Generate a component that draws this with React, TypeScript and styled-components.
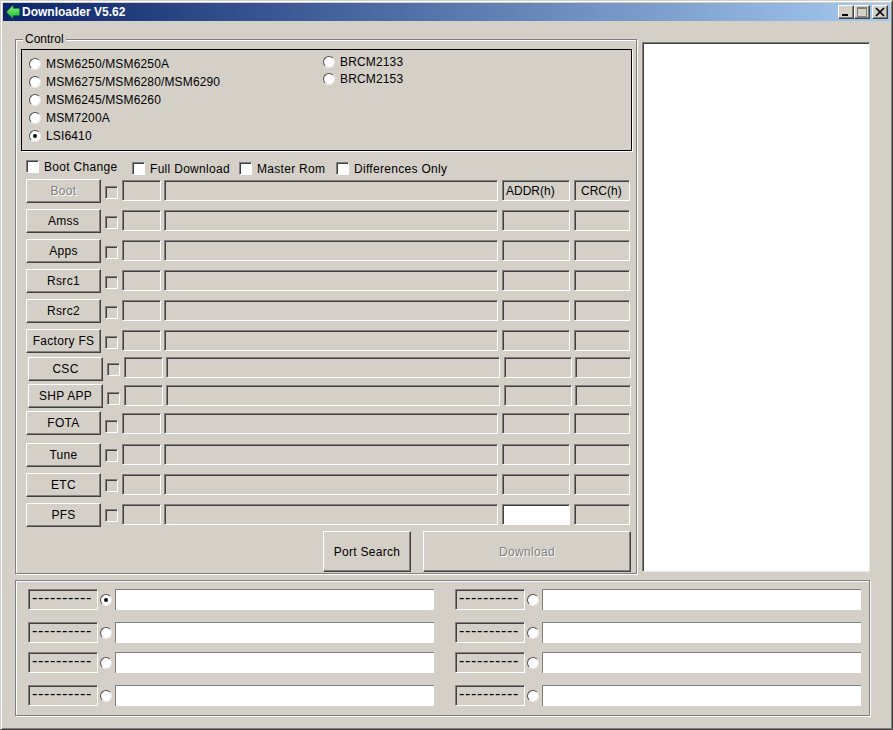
import React from "react";
import styled, { createGlobalStyle, css } from "styled-components";

const Global = createGlobalStyle`
  html, body { margin: 0; padding: 0; background: #d4d0c8; }
  * { box-sizing: border-box; }
`;

const FONT = `"Liberation Sans", Arial, sans-serif`;
const BG = "#d4d0c8";

const sunken = css`
  border-style: solid;
  border-width: 1px;
  border-color: #808080 #fff #fff #808080;
  box-shadow: inset 1px 1px 0 #404040;
`;

const raised = css`
  border-style: solid;
  border-width: 1px;
  border-color: #fff #404040 #404040 #fff;
  box-shadow: inset -1px -1px 0 #808080;
  background: ${BG};
`;

const etched = css`
  border: 1px solid #808080;
  box-shadow: inset 1px 1px 0 #fff, 1px 1px 0 #fff;
`;

const Window = styled.div`
  width: 893px;
  height: 730px;
  padding: 2px;
  background: ${BG};
  border-style: solid;
  border-width: 1px;
  border-color: ${BG} #404040 #404040 ${BG};
  box-shadow: inset 1px 1px 0 #fff, inset -1px -1px 0 #808080;
  font-family: ${FONT};
  font-size: 12px;
  color: #000;
  display: flex;
  flex-direction: column;
  overflow: hidden;
`;

const TitleBar = styled.div`
  height: 18px;
  flex: none;
  display: flex;
  align-items: center;
  padding: 0 2px 0 3px;
  background: linear-gradient(90deg, #0a246a, #a6caf0);
`;

const TitleText = styled.span`
  margin-left: 2px;
  color: #fff;
  font-weight: 700;
  font-size: 12px;
  flex: 1;
`;

const CaptionButton = styled.span<{ $gap?: number }>`
  ${raised}
  width: 16px;
  height: 14px;
  margin-left: ${(p) => p.$gap ?? 0}px;
  display: flex;
  align-items: center;
  justify-content: center;
`;

const Main = styled.div`
  display: flex;
  gap: 5px;
  padding: 18px 0 0 12px;
`;

const ControlGroup = styled.div`
  ${etched}
  position: relative;
  width: 622px;
  height: 535px;
  padding: 9px 4px 0 6px;
`;

const Legend = styled.span`
  position: absolute;
  left: 7px;
  top: -8px;
  padding: 0 2px;
  line-height: 14px;
  background: ${BG};
`;

const OutputPanel = styled.div`
  ${sunken}
  border-color: #808080 #e8e8e8 #e8e8e8 #808080;
  width: 228px;
  height: 530px;
  margin-top: 3px;
  background: #fff;
`;

const ChipBox = styled.div`
  width: 611px;
  height: 102px;
  margin-left: -1px;
  padding: 5px 0 0 7px;
  border: 1px solid #000;
  box-shadow: 1px 1px 0 #fff;
  display: flex;
`;

const ChipColumn = styled.div<{ $width?: number; $shift?: number }>`
  width: ${(p) => (p.$width ? `${p.$width}px` : "auto")};
  margin-top: ${(p) => p.$shift ?? 0}px;
`;

const RadioRow = styled.label<{ $height?: number }>`
  height: ${(p) => p.$height ?? 18}px;
  display: flex;
  align-items: center;
  gap: 5px;
  letter-spacing: 0.15px;
`;

const Radio = styled.span<{ $on?: boolean }>`
  width: 12px;
  height: 12px;
  flex: none;
  border-radius: 50%;
  background: #fff;
  border: 1px solid;
  border-color: #505050 #e8e8e8 #e8e8e8 #505050;
  display: flex;
  align-items: center;
  justify-content: center;
  &::after {
    content: "";
    width: 4px;
    height: 4px;
    border-radius: 50%;
    background: ${(p) => (p.$on ? "#000" : "transparent")};
  }
`;

const OptionRow = styled.div`
  height: 19px;
  margin-top: 9px;
  margin-left: 4px;
  display: flex;
  align-items: flex-start;
`;

const Option = styled.label<{ $width: number; $top: number }>`
  width: ${(p) => p.$width}px;
  margin-top: ${(p) => p.$top}px;
  display: flex;
  align-items: center;
  gap: 5px;
  height: 13px;
  letter-spacing: 0.3px;
  white-space: nowrap;
`;

const CheckBox = styled.span<{ $off?: boolean }>`
  ${sunken}
  width: 13px;
  height: 13px;
  flex: none;
  background: ${(p) => (p.$off ? BG : "#fff")};
`;

const FieldRow = styled.div<{ $gap: number; $indent?: boolean }>`
  height: 24px;
  margin-top: ${(p) => p.$gap}px;
  margin-left: ${(p) => (p.$indent ? 6 : 4)}px;
  display: flex;
  align-items: flex-start;
`;

const RowButton = styled.button<{ $disabled?: boolean }>`
  ${raised}
  width: 75px;
  height: 24px;
  padding: 0;
  flex: none;
  font: 12px ${FONT};
  letter-spacing: 0.3px;
  color: ${(p) => (p.$disabled ? "#808080" : "#000")};
  text-shadow: ${(p) => (p.$disabled ? "1px 1px 0 #fff" : "none")};
`;

const RowCheck = styled(CheckBox)<{ $top: number }>`
  margin: ${(p) => p.$top}px 0 0 4px;
`;

const Field = styled.div<{ $width: number; $top: number; $gap: number; $white?: boolean }>`
  ${sunken}
  width: ${(p) => p.$width}px;
  height: 21px;
  margin: ${(p) => p.$top}px 0 0 ${(p) => p.$gap}px;
  padding: 3px 0 0 3px;
  flex: none;
  line-height: 15px;
  background: ${(p) => (p.$white ? "#fff" : BG)};
`;

const CrcField = styled(Field)`
  padding-left: 6px;
`;

const ActionRow = styled.div`
  margin: 4px 0 0 301px;
  display: flex;
  gap: 12px;
`;

const ActionButton = styled.button<{ $width: number; $disabled?: boolean }>`
  ${raised}
  width: ${(p) => p.$width}px;
  height: 41px;
  padding: 0;
  font: 12px ${FONT};
  letter-spacing: 0.3px;
  color: ${(p) => (p.$disabled ? "#808080" : "#000")};
  text-shadow: ${(p) => (p.$disabled ? "1px 1px 0 #fff" : "none")};
`;

const PortGroup = styled.div`
  ${etched}
  width: 855px;
  height: 136px;
  margin: 6px 0 0 12px;
  padding: 8px 0 0 12px;
  display: grid;
  grid-template-columns: 427px 406px;
  grid-template-rows: 21px 21px 21px 21px;
  row-gap: 12px;
`;

const PortRows = styled.div<{ $shift?: number }>`
  display: flex;
  align-items: center;
  height: 21px;
  margin-top: ${(p) => p.$shift ?? 0}px;
`;

const PortLabel = styled.div`
  ${sunken}
  width: 70px;
  height: 21px;
  padding: 0 0 0 3px;
  font-size: 16px;
  line-height: 15px;
  letter-spacing: 0.67px;
  white-space: nowrap;
  overflow: hidden;
  background: ${BG};
`;

const PortRadio = styled(Radio)`
  margin-left: 2px;
`;

const PortInput = styled.div`
  width: 319px;
  height: 21px;
  margin-left: 3px;
  background: #fff;
  border-style: solid;
  border-width: 1px 0 0 1px;
  border-color: #808080;
`;

const ROWS = [
  { name: "Boot", gap: 0, check: 7, field: 1, off: true },
  { name: "Amss", gap: 6, check: 7, field: 1 },
  { name: "Apps", gap: 6, check: 7, field: 1 },
  { name: "Rsrc1", gap: 6, check: 7, field: 1 },
  { name: "Rsrc2", gap: 6, check: 7, field: 1 },
  { name: "Factory FS", gap: 6, check: 7, field: 1 },
  { name: "CSC", gap: 4, check: 6, field: 0, indent: true },
  { name: "SHP APP", gap: 3, check: 8, field: 1, indent: true },
  { name: "FOTA", gap: 3, check: 9, field: 2 },
  { name: "Tune", gap: 8, check: 6, field: 1 },
  { name: "ETC", gap: 6, check: 6, field: 1 },
  { name: "PFS", gap: 6, check: 6, field: 1, white: true },
];

const CHIPS = ["MSM6250/MSM6250A", "MSM6275/MSM6280/MSM6290", "MSM6245/MSM6260", "MSM7200A", "LSI6410"];

const PORTS = [
  { shift: 0, on: true },
  { shift: 0 },
  { shift: -3 },
  { shift: -3 },
];

const Logo = () => (
  <svg width="14" height="14" viewBox="0 0 14 14">
    <defs>
      <linearGradient id="arrowFill" x1="0" y1="0" x2="0" y2="1">
        <stop offset="0" stopColor="#8cf57a" />
        <stop offset="1" stopColor="#18b830" />
      </linearGradient>
    </defs>
    <path d="M0.5 7 L7 0.3 L7 3.5 L13.5 3.5 L13.5 10.5 L7 10.5 L7 13.7 Z" fill="url(#arrowFill)" stroke="#128a28" strokeWidth="0.5" />
  </svg>
);

const MinIcon = () => (
  <svg width="10" height="10" viewBox="0 0 10 10">
    <rect x="1" y="7" width="6" height="2" fill="#000" />
  </svg>
);

const MaxIcon = () => (
  <svg width="10" height="10" viewBox="0 0 10 10">
    <rect x="0.5" y="0.5" width="9" height="9" fill="none" stroke="#808080" />
    <rect x="1" y="1" width="8" height="1" fill="#808080" />
  </svg>
);

const CloseIcon = () => (
  <svg width="10" height="10" viewBox="0 0 10 10">
    <path d="M1 1 L9 9 M9 1 L1 9" stroke="#000" strokeWidth="1.7" />
  </svg>
);

export default function App() {
  return (
    <>
      <Global />
      <Window>
        <TitleBar>
          <Logo />
          <TitleText>Downloader V5.62</TitleText>
          <CaptionButton><MinIcon /></CaptionButton>
          <CaptionButton><MaxIcon /></CaptionButton>
          <CaptionButton $gap={2}><CloseIcon /></CaptionButton>
        </TitleBar>
        <Main>
          <ControlGroup>
            <Legend>Control</Legend>
            <ChipBox>
              <ChipColumn $width={294}>
                {CHIPS.map((c) => (
                  <RadioRow key={c}>
                    <Radio $on={c === "LSI6410"} />
                    {c}
                  </RadioRow>
                ))}
              </ChipColumn>
              <ChipColumn $shift={-2}>
                <RadioRow $height={17}><Radio />BRCM2133</RadioRow>
                <RadioRow $height={17}><Radio />BRCM2153</RadioRow>
              </ChipColumn>
            </ChipBox>
            <OptionRow>
              <Option $width={106} $top={0}><CheckBox />Boot Change</Option>
              <Option $width={107} $top={2}><CheckBox />Full Download</Option>
              <Option $width={97} $top={2}><CheckBox />Master Rom</Option>
              <Option $width={120} $top={2}><CheckBox />Differences Only</Option>
            </OptionRow>
            {ROWS.map((r) => (
              <FieldRow key={r.name} $gap={r.gap} $indent={r.indent}>
                <RowButton $disabled={r.off}>{r.name}</RowButton>
                <RowCheck $off $top={r.check} />
                <Field $width={39} $gap={4} $top={r.field} />
                <Field $width={334} $gap={3} $top={r.field} />
                <Field $width={68} $gap={4} $top={r.field} $white={r.white}>
                  {r.name === "Boot" ? "ADDR(h)" : null}
                </Field>
                <CrcField $width={56} $gap={r.indent ? 3 : 4} $top={r.field}>
                  {r.name === "Boot" ? "CRC(h)" : null}
                </CrcField>
              </FieldRow>
            ))}
            <ActionRow>
              <ActionButton $width={88}>Port Search</ActionButton>
              <ActionButton $width={208} $disabled>Download</ActionButton>
            </ActionRow>
          </ControlGroup>
          <OutputPanel />
        </Main>
        <PortGroup>
          {PORTS.flatMap((p, i) =>
            [0, 1].map((col) => (
              <PortRows key={`${i}-${col}`} $shift={p.shift}>
                <PortLabel>----------</PortLabel>
                <PortRadio $on={p.on && col === 0} />
                <PortInput />
              </PortRows>
            ))
          )}
        </PortGroup>
      </Window>
    </>
  );
}
